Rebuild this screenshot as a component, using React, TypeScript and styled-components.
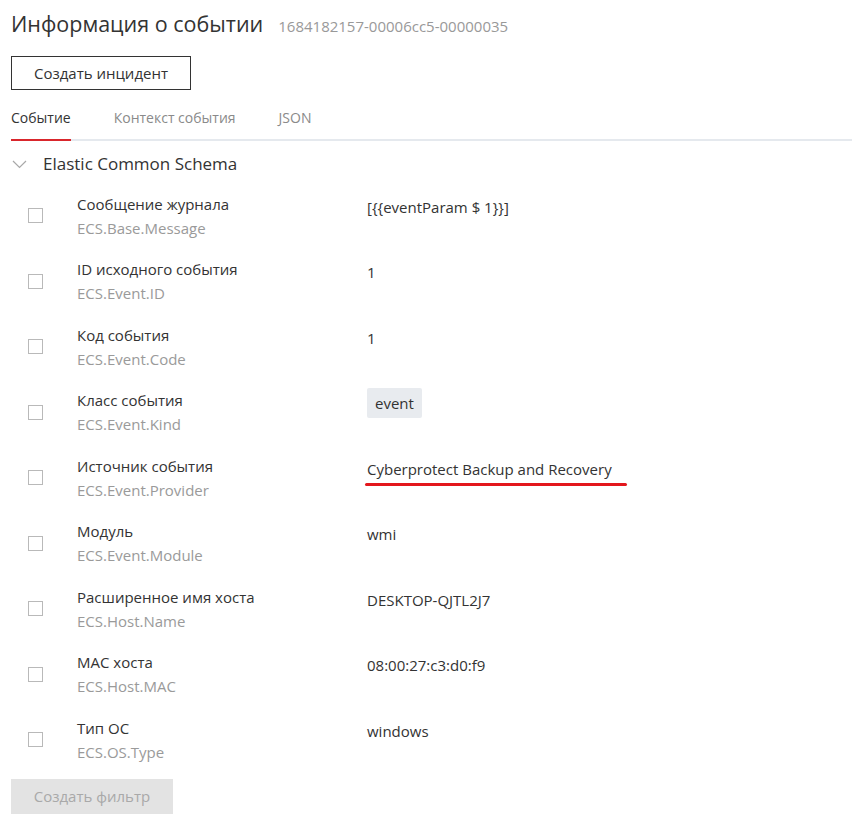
import React from "react";
import styled, { createGlobalStyle } from "styled-components";

const GlobalStyle = createGlobalStyle`
  body {
    margin: 0;
    background: #fff;
    font-family: "Open Sans", "Liberation Sans", sans-serif;
    color: #333;
  }
`;

const Page = styled.div`
  padding: 9px 0 0 11px;
  display: flex;
  flex-direction: column;
`;

const Header = styled.div`
  display: flex;
  align-items: baseline;
  gap: 15px;
`;

const Title = styled.h1`
  margin: 0;
  font-size: 21.5px;
  font-weight: 400;
  line-height: 29px;
  color: #333;
`;

const EventId = styled.span`
  font-size: 15px;
  color: #999;
`;

const Button = styled.button<{ disabled?: boolean }>`
  align-self: flex-start;
  font-family: inherit;
  font-size: 15px;
  line-height: 20px;
  height: 34px;
  padding: 0;
  border: ${(p) => (p.disabled ? "none" : "1px solid #333")};
  background: ${(p) => (p.disabled ? "#e3e3e3" : "#fff")};
  color: ${(p) => (p.disabled ? "#a9a9a9" : "#333")};
  cursor: ${(p) => (p.disabled ? "default" : "pointer")};
`;

const TopButton = styled(Button)`
  margin-top: 18px;
  width: 180px;
`;

const FilterButton = styled(Button)`
  margin-top: 6px;
  width: 162px;
  height: 35px;
`;

const Tabs = styled.div`
  margin-top: 10px;
  display: flex;
  gap: 43px;
  border-bottom: 2px solid #e5e9ee;
`;

const Tab = styled.div<{ active?: boolean }>`
  font-size: 14px;
  line-height: 20px;
  padding: 8px 0 11px;
  margin-bottom: -2px;
  color: ${(p) => (p.active ? "#333" : "#8a8a8a")};
  border-bottom: 2px solid ${(p) => (p.active ? "#d9262c" : "transparent")};
`;

const Section = styled.div`
  margin-top: 11px;
  display: flex;
  align-items: center;
  gap: 16px;
  font-size: 17px;
  line-height: 24px;
  color: #333;
`;

const Chevron = styled.svg`
  width: 15px;
  height: 9px;
  margin-left: 1px;
`;

const Rows = styled.div`
  margin-top: 7px;
  display: flex;
  flex-direction: column;
`;

const Row = styled.div`
  display: grid;
  grid-template-columns: 15px 290px 1fr;
  column-gap: 34px;
  align-items: center;
  padding: 8.75px 0 8.75px 17px;
  & > div:first-child {
    margin-right: -34px;
  }
`;

const Check = styled.span`
  width: 15px;
  height: 15px;
  box-sizing: border-box;
  border: 1px solid #b9b9b9;
  background: #fff;
`;

const Field = styled.div`
  display: flex;
  flex-direction: column;
  font-size: 15px;
  line-height: 24px;
`;

const Label = styled.span`
  color: #333;
`;

const Key = styled.span`
  color: #9a9a9a;
`;

const Value = styled.div`
  align-self: start;
  font-size: 15px;
  line-height: 30px;
  color: #333;
  margin-left: -34px;
`;

const Chip = styled.span`
  display: inline-block;
  padding: 0 8px;
  background: #e8ebef;
  border-radius: 2px;
  line-height: 30px;
`;

const Marked = styled.span`
  position: relative;
  display: inline-block;
  &::after {
    content: "";
    position: absolute;
    left: -2px;
    right: -15px;
    top: 29px;
    height: 3px;
    border-radius: 2px;
    background: #e3171d;
  }
`;

type Item = { label: string; key: string; value: string; kind?: "chip" | "marked" };

const items: Item[] = [
  { label: "Сообщение журнала", key: "ECS.Base.Message", value: "[{{eventParam $ 1}}]" },
  { label: "ID исходного события", key: "ECS.Event.ID", value: "1" },
  { label: "Код события", key: "ECS.Event.Code", value: "1" },
  { label: "Класс события", key: "ECS.Event.Kind", value: "event", kind: "chip" },
  { label: "Источник события", key: "ECS.Event.Provider", value: "Cyberprotect Backup and Recovery", kind: "marked" },
  { label: "Модуль", key: "ECS.Event.Module", value: "wmi" },
  { label: "Расширенное имя хоста", key: "ECS.Host.Name", value: "DESKTOP-QJTL2J7" },
  { label: "MAC хоста", key: "ECS.Host.MAC", value: "08:00:27:c3:d0:f9" },
  { label: "Тип ОС", key: "ECS.OS.Type", value: "windows" },
];

function renderValue(item: Item) {
  if (item.kind === "chip") return <Chip>{item.value}</Chip>;
  if (item.kind === "marked") return <Marked>{item.value}</Marked>;
  return item.value;
}

export default function App() {
  return (
    <Page>
      <GlobalStyle />
      <Header>
        <Title>Информация о событии</Title>
        <EventId>1684182157-00006cc5-00000035</EventId>
      </Header>
      <TopButton>Создать инцидент</TopButton>
      <Tabs>
        <Tab active>Событие</Tab>
        <Tab>Контекст события</Tab>
        <Tab>JSON</Tab>
      </Tabs>
      <Section>
        <Chevron viewBox="0 0 15 9">
          <polyline points="1,1 7.5,7.5 14,1" fill="none" stroke="#a8a8a8" strokeWidth="1.2" />
        </Chevron>
        Elastic Common Schema
      </Section>
      <Rows>
        {items.map((item) => (
          <Row key={item.key}>
            <Check />
            <Field>
              <Label>{item.label}</Label>
              <Key>{item.key}</Key>
            </Field>
            <Value>{renderValue(item)}</Value>
          </Row>
        ))}
      </Rows>
      <FilterButton disabled>Создать фильтр</FilterButton>
    </Page>
  );
}
